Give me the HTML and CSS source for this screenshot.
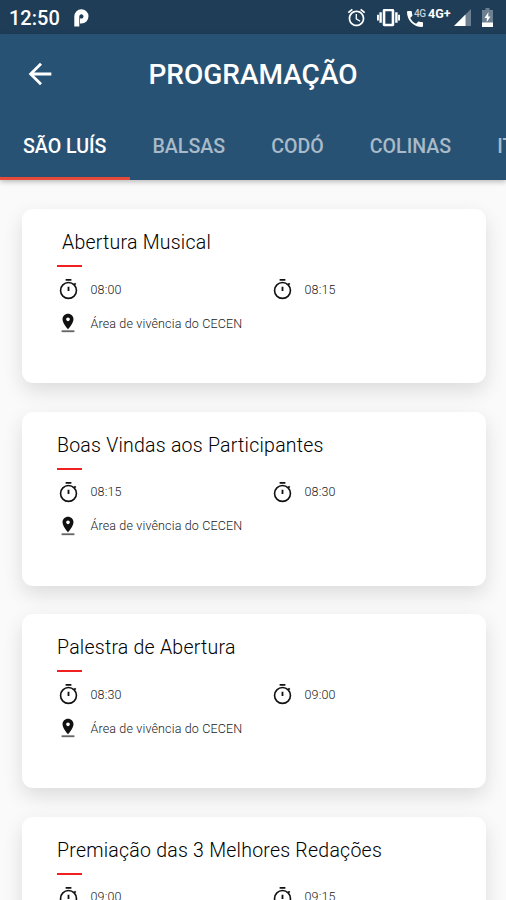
FILE: index.html
```
<!DOCTYPE html>
<html lang="pt-BR">
<head>
<meta charset="utf-8">
<title>Programação</title>
<link rel="stylesheet" href="styles.css">
</head>
<body>
<svg class="defs" width="0" height="0">
  <symbol id="timer" viewBox="0 0 24 24"><path d="M9 2h6M12 9v4.500M18 7l1.500-1.500" fill="none" stroke="#111" stroke-width="1.900"/><circle cx="12" cy="13" r="8.300" fill="none" stroke="#111" stroke-width="1.700"/></symbol>
  <symbol id="pin" viewBox="0 0 24 24"><path d="M18 8c0-3.310-2.690-6-6-6S6 4.690 6 8c0 4.500 6 11 6 11s6-6.500 6-11zm-8 0c0-1.100.9-2 2-2s2 .9 2 2-.89 2-2 2c-1.100 0-2-.9-2-2z"/><path d="M5 20v2h14v-2H5z" opacity=".65"/></symbol>
</svg>
<div class="screen">
  <div class="status">
    <span class="clock">12:50</span>
    <svg class="p-icon" width="15" height="18" viewBox="0 0 15 18"><path d="M2.800 17.500V7.500A4.600 4.600 0 1 1 7.400 12H6" fill="none" stroke="#fff" stroke-width="5"/></svg>
    <div class="status-icons">
      <svg class="alarm" width="21" height="21" viewBox="0 0 24 24"><path d="M22 5.720l-4.600-3.860-1.290 1.530 4.600 3.860L22 5.720zM7.880 3.390L6.600 1.860 2 5.710l1.290 1.530 4.590-3.850zM12.500 8H11v6l4.750 2.850.75-1.230-4-2.370V8zM12 4c-4.970 0-9 4.030-9 9s4.020 9 9 9c4.970 0 9-4.030 9-9s-4.030-9-9-9zm0 16c-3.870 0-7-3.130-7-7s3.130-7 7-7 7 3.130 7 7-3.130 7-7 7z"/></svg>
      <svg class="vibrate" width="23" height="23" viewBox="0 0 24 24"><path d="M0 15h2V9H0v6zm2.500 2.500H5V6.500H2.500v11zM22 9v6h2V9h-2zm-3 8.500h2.500V6.500H19v11zM16.500 3h-9C6.670 3 6 3.670 6 4.500v15c0 .83.67 1.500 1.500 1.500h9c.83 0 1.500-.67 1.500-1.500v-15c0-.83-.67-1.500-1.500-1.500zM15.300 18.500H8.700V5.500h6.600v13z"/></svg>
      <div class="call">
        <svg width="16" height="16" viewBox="3 3 18 18"><path d="M20 15.500c-1.250 0-2.450-.2-3.570-.57-.35-.11-.74-.03-1.020.24l-2.200 2.200c-2.830-1.440-5.150-3.750-6.590-6.590l2.200-2.210c.28-.26.36-.65.25-1C8.700 6.450 8.500 5.250 8.500 4c0-.55-.45-1-1-1H4c-.55 0-1 .45-1 1 0 9.390 7.610 17 17 17 .55 0 1-.45 1-1v-3.500c0-.55-.45-1-1-1z"/></svg>
        <span class="call-net">4G</span>
      </div>
      <span class="net">4G+</span>
      <svg class="signal" width="17" height="18" viewBox="0 0 17 18"><path d="M17 0V17H0z" opacity=".35"/><path d="M11.500 5.500V17H0z"/></svg>
      <svg class="battery" width="11" height="19" viewBox="0 0 11 19"><path d="M3.500 0h4v2H11v17H0V2h3.500z" opacity=".35"/><path d="M0 14.500h11V19H0zM6.500 4L2.500 10h2.300v4L8.500 8.500H6.200z"/></svg>
    </div>
  </div>
  <header class="header">
    <div class="bar">
      <svg class="back" width="34" height="34" viewBox="0 0 24 24"><path d="M20 11H7.830l5.590-5.590L12 4l-8 8 8 8 1.410-1.410L7.830 13H20v-2z"/></svg>
      <h1><span>PROGRAMAÇÃO</span></h1>
    </div>
    <nav class="tabs">
      <span class="tab active"><span>SÃO LUÍS</span></span>
      <span class="tab"><span>BALSAS</span></span>
      <span class="tab"><span>CODÓ</span></span>
      <span class="tab"><span>COLINAS</span></span>
      <span class="tab"><span>IT</span></span>
    </nav>
  </header>
  <main class="list">
    <article class="card">
      <h2 class="inset">Abertura Musical</h2>
      <div class="rule"></div>
      <div class="row times"><div class="cell"><svg class="icon"><use href="#timer"/></svg><span>08:00</span></div><div class="cell"><svg class="icon"><use href="#timer"/></svg><span>08:15</span></div></div>
      <div class="row place"><svg class="icon"><use href="#pin"/></svg><span>Área de vivência do CECEN</span></div>
    </article>
    <article class="card">
      <h2>Boas Vindas aos Participantes</h2>
      <div class="rule"></div>
      <div class="row times"><div class="cell"><svg class="icon"><use href="#timer"/></svg><span>08:15</span></div><div class="cell"><svg class="icon"><use href="#timer"/></svg><span>08:30</span></div></div>
      <div class="row place"><svg class="icon"><use href="#pin"/></svg><span>Área de vivência do CECEN</span></div>
    </article>
    <article class="card">
      <h2>Palestra de Abertura</h2>
      <div class="rule"></div>
      <div class="row times"><div class="cell"><svg class="icon"><use href="#timer"/></svg><span>08:30</span></div><div class="cell"><svg class="icon"><use href="#timer"/></svg><span>09:00</span></div></div>
      <div class="row place"><svg class="icon"><use href="#pin"/></svg><span>Área de vivência do CECEN</span></div>
    </article>
    <article class="card">
      <h2>Premiação das 3 Melhores Redações</h2>
      <div class="rule"></div>
      <div class="row times"><div class="cell"><svg class="icon"><use href="#timer"/></svg><span>09:00</span></div><div class="cell"><svg class="icon"><use href="#timer"/></svg><span>09:15</span></div></div>
      <div class="row place"><svg class="icon"><use href="#pin"/></svg><span>Área de vivência do CECEN</span></div>
    </article>
  </main>
</div>
</body>
</html>
```
FILE: styles.css
```
* { box-sizing: border-box; }
body { margin: 0; overflow: hidden; font-family: Roboto, "Liberation Sans", sans-serif; }
.defs { position: absolute; }
svg { display: block; flex: none; }
.screen { width: 506px; height: 900px; overflow: hidden; background: #fafafa; display: flex; flex-direction: column; }

.status { height: 34px; flex: none; background: #1f3d57; color: #fff; display: flex; align-items: center; padding: 2px 13px 0 9px; }
.status svg { fill: #fff; }
.clock { font-size: 20px; font-weight: 500; line-height: 32px; width: 65px; }
.status-icons { margin-left: auto; display: flex; align-items: center; }
.alarm { margin-top: -2px; }
.vibrate { margin: -2px 0 0 10px; }
.call { position: relative; margin-left: 7px; width: 21px; padding-top: 1px; }
.call-net { position: absolute; left: 7px; top: -1px; font-size: 10px; line-height: 10px; font-weight: 500; letter-spacing: -.4px; color: #c5d0da; }
.net { font-size: 12.500px; font-weight: 700; line-height: 14px; margin-top: -9px; width: 26px; }
.battery { margin: -1px 0 0 11px; }

.header { flex: none; height: 146px; background: #285274; color: #fff; display: flex; flex-direction: column; position: relative; box-shadow: 0 2px 5px rgba(0,0,0,.25); }
.bar { height: 79px; display: grid; grid-template-columns: 70px 1fr 70px; align-items: center; }
.back { fill: #fff; margin-left: 23px; }
h1 { margin: 3px 0 0; text-align: center; font-size: 28px; line-height: 32px; font-weight: 500; }
.tabs { flex: 1; display: flex; overflow: hidden; }
.tab { flex: none; padding: 2px 23px 0; display: flex; align-items: center; font-size: 19.600px; font-weight: 500; color: #a9bac8; border-bottom: 3px solid transparent; }
.tab.active { color: #fff; border-bottom-color: #e84b3c; }

.list { padding: 29px 20.500px 0 21.500px; display: flex; flex-direction: column; gap: 28.500px; }
.card { flex: none; height: 174px; padding: 20px 35.500px; border-radius: 11px; background: #fff; box-shadow: 0 8px 20px rgba(0,0,0,.12); }
h2 { margin: 0; font-size: 19.500px; line-height: 28px; font-weight: 300; letter-spacing: .24px; color: #000; white-space: nowrap; }
.inset { padding-left: 5px; }
.rule { width: 25px; height: 2px; margin-top: 8px; background: #f02020; }
.row { display: flex; align-items: center; font-size: 12.500px; font-weight: 300; letter-spacing: .15px; color: #222; }
.times { height: 24px; margin-top: 10px; }
.place { height: 24px; margin-top: 10px; }
.cell { display: flex; align-items: center; width: 214px; flex: none; }
.icon { width: 23px; height: 23px; fill: #111; margin: 1px 11px 0 -.5px; }
.place .icon { width: 22px; height: 22px; margin: 0 11.500px 0 0; }
```
